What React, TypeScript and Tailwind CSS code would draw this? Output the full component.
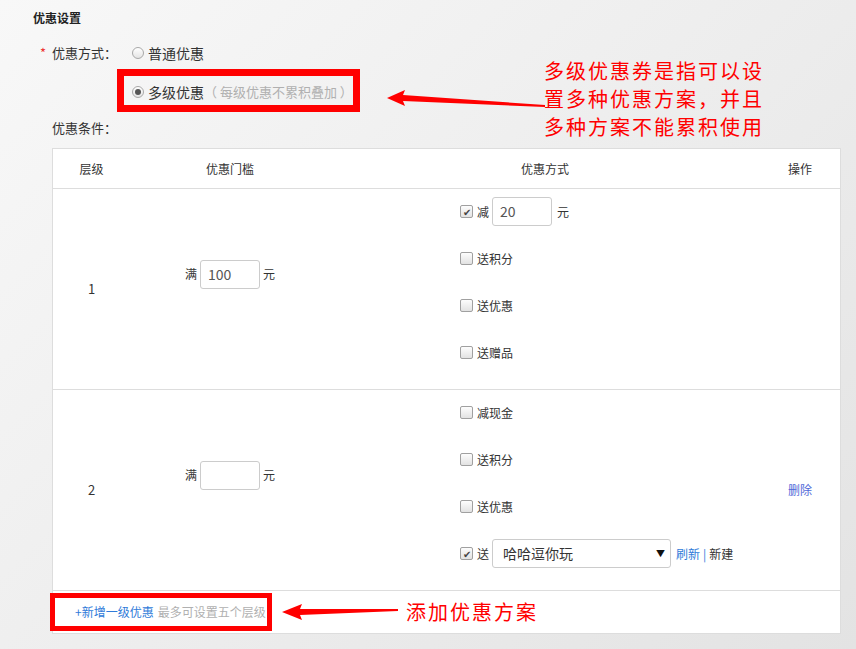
import React from "react";

function Radio({ checked = false }: { checked?: boolean }) {
  return (
    <span className="flex h-[12px] w-[12px] shrink-0 items-center justify-center rounded-full border border-[#a8a8a8] bg-[linear-gradient(#ffffff,#e4e4e4)]">
      {checked && <span className="h-[6px] w-[6px] rounded-full bg-[#555]" />}
    </span>
  );
}

function Checkbox({ checked = false }: { checked?: boolean }) {
  return (
    <span className="flex h-[13px] w-[13px] shrink-0 items-center justify-center rounded-[2px] border border-[#a0a0a0] bg-[linear-gradient(#fdfdfd,#e2e2e2)] text-[10px] leading-none text-[#444]">
      {checked ? "✔" : ""}
    </span>
  );
}

function TextBox({ value, width }: { value: string; width: string }) {
  return (
    <span
      className={`flex h-[29px] ${width} items-center rounded-[3px] border border-[#cccccc] bg-white pl-[7px] text-[14px] text-[#555]`}
    >
      {value}
    </span>
  );
}

function Option({ label, checked = false, children }: { label?: string; checked?: boolean; children?: React.ReactNode }) {
  return (
    <div className="flex h-[29px] items-center">
      <Checkbox checked={checked} />
      <span className="ml-[4px]">{label}</span>
      {children}
    </div>
  );
}

export default function App() {
  return (
    <div className="relative h-[649px] w-[856px] overflow-hidden bg-[linear-gradient(135deg,#f8f8f8,#e3e3e3)] font-['Noto_Sans_CJK_SC','Noto_Sans',sans-serif] text-[12px] text-[#333]">
      <div className="pl-[33px] pt-[10px] text-[12px] font-bold leading-[16px] text-[#222]">优惠设置</div>

      <div className="mt-[17px] flex h-[20px] items-center">
        <span className="w-[52px] pl-[40px] text-[13px] text-[#e33]">*</span>
        <span className="w-[80px] text-[13px]">优惠方式：</span>
        <Radio />
        <span className="ml-[4px] text-[14px]">普通优惠</span>
      </div>

      <div className="mt-[19px] flex h-[20px] items-center pl-[132px]">
        <Radio checked />
        <span className="ml-[4px] text-[14px]">多级优惠</span>
        <span className="text-[13px] text-[#b0b0b0]">（ 每级优惠不累积叠加 ）</span>
      </div>

      <div className="mt-[16px] h-[20px] pl-[52px] text-[13px] leading-[20px]">优惠条件：</div>

      <div className="ml-[52px] mt-[10px] w-[789px] border border-[#dddddd] bg-white">
        <div className="grid h-[40px] grid-cols-[77px_200px_430px_80px] items-center border-b border-[#dddddd] text-center">
          <span>层级</span>
          <span>优惠门槛</span>
          <span>优惠方式</span>
          <span>操作</span>
        </div>

        <div className="grid h-[201px] grid-cols-[77px_200px_430px_80px] border-b border-[#dddddd]">
          <div className="flex items-center justify-center text-[13px]">1</div>
          <div className="flex items-center justify-center pb-[30px]">
            <span>满</span>
            <span className="mx-[3px]"><TextBox value="100" width="w-[60px]" /></span>
            <span>元</span>
          </div>
          <div className="flex flex-col gap-[18px] pl-[130px] pt-[8px]">
            <Option label="减" checked>
              <span className="ml-[3px]"><TextBox value="20" width="w-[60px]" /></span>
              <span className="ml-[5px]">元</span>
            </Option>
            <Option label="送积分" />
            <Option label="送优惠" />
            <Option label="送赠品" />
          </div>
          <div />
        </div>

        <div className="grid h-[201px] grid-cols-[77px_200px_430px_80px] border-b border-[#dddddd]">
          <div className="flex items-center justify-center text-[13px]">2</div>
          <div className="flex items-center justify-center pb-[30px]">
            <span>满</span>
            <span className="mx-[3px]"><TextBox value="" width="w-[60px]" /></span>
            <span>元</span>
          </div>
          <div className="flex flex-col gap-[18px] pl-[130px] pt-[8px]">
            <Option label="减现金" />
            <Option label="送积分" />
            <Option label="送优惠" />
            <Option label="送" checked>
              <span className="ml-[3px] flex h-[29px] w-[179px] items-center justify-between rounded-[3px] border border-[#cccccc] bg-white pl-[10px] pr-[5px] text-[14px] text-[#333]">
                哈哈逗你玩
                <span className="text-[9px] text-[#111]">▼</span>
              </span>
              <span className="ml-[5px] text-[#2f7bd9]">刷新</span>
              <span className="mx-[3px] text-[#2f7bd9]">|</span>
              <span>新建</span>
            </Option>
          </div>
          <div className="flex items-center justify-center text-[#5068d8]">删除</div>
        </div>

        <div className="flex h-[42px] items-center pl-[22px]">
          <span className="text-[#2f7bd9]">+新增一级优惠</span>
          <span className="ml-[4px] text-[#b0b0b0]">最多可设置五个层级</span>
        </div>
      </div>

      {/* annotations */}
      <div className="absolute left-[117px] top-[69px] h-[43px] w-[243px] border-[7px] border-[#ff0000]" />
      <div className="absolute left-[50px] top-[593px] h-[38px] w-[222px] border-[5px] border-[#ff0000]" />

      <svg className="absolute left-0 top-0" width="856" height="649">
        <polygon points="387,98 405,90 403,95 545,105 545,107 403,101 405,106" fill="#ff0000" />
        <polygon points="282,612 302,604 300,609 398,609 398,611 300,615 302,620" fill="#ff0000" />
      </svg>

      <div className="absolute left-[544px] top-[57px] text-[20px] leading-[28px] tracking-[2px] text-[#ff0000]">
        <div>多级优惠券是指可以设</div>
        <div>置多种优惠方案，并且</div>
        <div>多种方案不能累积使用</div>
      </div>
      <div className="absolute left-[406px] top-[598px] text-[20px] leading-[28px] tracking-[2px] text-[#ff0000]">添加优惠方案</div>
    </div>
  );
}
